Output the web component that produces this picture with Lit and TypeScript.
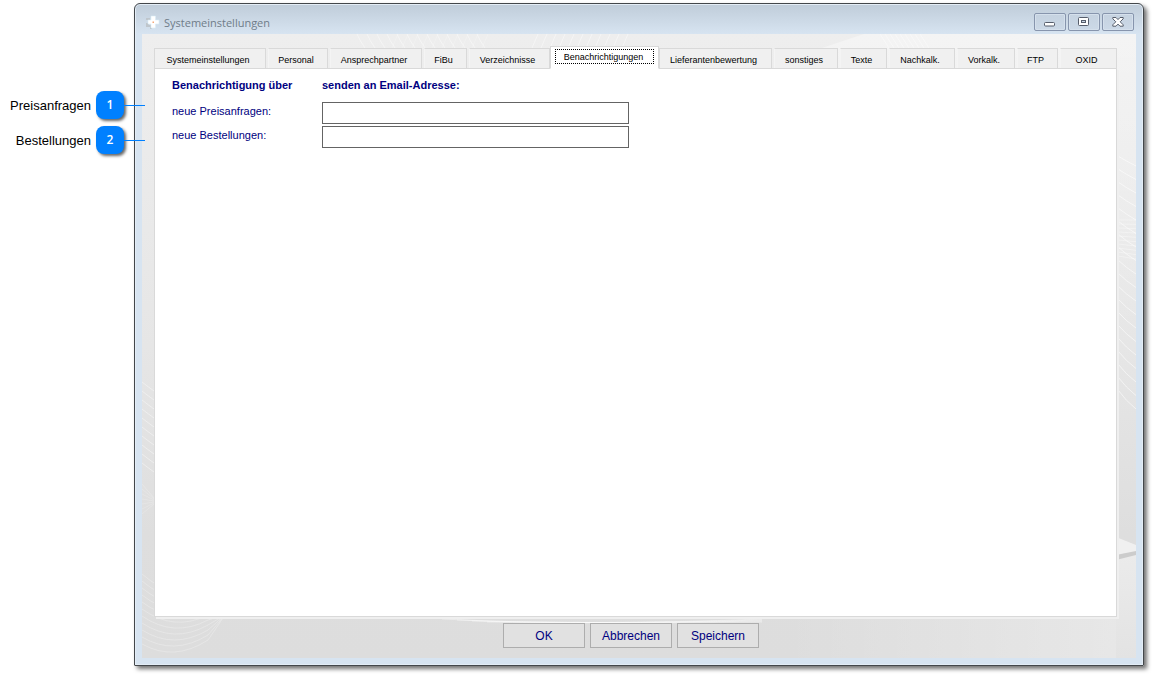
import { LitElement, html, svg, css } from "lit";
import { customElement, property, state } from "lit/decorators.js";
import { classMap } from "lit/directives/class-map.js";

const TABS = [
  "Systemeinstellungen",
  "Personal",
  "Ansprechpartner",
  "FiBu",
  "Verzeichnisse",
  "Benachrichtigungen",
  "Lieferantenbewertung",
  "sonstiges",
  "Texte",
  "Nachkalk.",
  "Vorkalk.",
  "FTP",
  "OXID",
];

const range = (n: number) => Array.from({ length: n }, (_, i) => i);

/** Numbered marker beside the window, with a leader line pointing into it. */
@customElement("callout-marker")
export class CalloutMarker extends LitElement {
  @property({ type: Number }) number = 1;
  @property() label = "";

  static styles = css`
    :host {
      display: flex;
      align-items: center;
      justify-content: flex-end;
      gap: 5px;
      position: relative;
      color: #000;
      font: 13px/28px "Liberation Sans", Arial, sans-serif;
    }
    .label {
      padding-top: 2px;
      line-height: 26px;
    }
    .badge {
      width: 28px;
      height: 28px;
      border-radius: 8px;
      background: #0080ff;
      box-shadow: 2px 2px 3px rgba(0, 0, 0, 0.6);
      color: #fff;
      font: 600 12px/28px "Open Sans", "Noto Sans", sans-serif;
      text-align: center;
    }
    .leader {
      position: absolute;
      left: 100%;
      top: 14px;
      width: 21px;
      height: 1px;
      background: #0080ff;
    }
  `;

  render() {
    return html`<span class="label">${this.label}</span><span class="badge">${this.number}</span
      ><span class="leader"></span>`;
  }
}

/** Faint curves and facets behind the window content. */
@customElement("window-backdrop")
export class WindowBackdrop extends LitElement {
  static styles = css`
    :host {
      position: absolute;
      inset: 0;
      background: linear-gradient(to bottom, #eeeeee, #e6e6e6 50%, #dedede 80%, #dddddd);
    }
    .art {
      display: block;
      width: 100%;
      height: 100%;
    }
  `;

  render() {
    return html`<svg class="art" viewBox="0 0 994 624" preserveAspectRatio="none" aria-hidden="true">
      <defs>
        <linearGradient id="lift" x1="0" x2="0" y1="0" y2="1">
          <stop offset="0" stop-color="#fff" stop-opacity=".35" />
          <stop offset="1" stop-color="#fff" stop-opacity="0" />
        </linearGradient>
        <linearGradient id="floor" x1="0" x2="1">
          <stop offset="0" stop-color="#fff" stop-opacity="0" />
          <stop offset="1" stop-color="#fff" stop-opacity=".3" />
        </linearGradient>
        <linearGradient id="side" x1="0" x2="0" y1="0" y2="1">
          <stop offset="0" stop-color="#ebebeb" />
          <stop offset="1" stop-color="#e3e3e3" />
        </linearGradient>
      </defs>
      <path d="M680 14L722 0H994V300H680Z" fill="url(#lift)" />
      <path d="M974 580V624H640V584Z" fill="url(#floor)" />
      <path d="M974 520H994V624H974Z" fill="url(#side)" />
      <path d="M974 503L994 511V518L974 521Z" fill="#f0f0f0" />
      <path d="M974 521L994 517V521L974 526Z" fill="#cccccc" />
      <g fill="none" stroke="#fff" stroke-opacity=".4">
        ${range(13).map((i) => svg`<path d=${`M${215 + i * 10} 0q3 7 8 14`} />`)}
        ${range(10).map((i) => svg`<path d=${`M${250 + i * 10} 14l6 -14`} stroke-opacity=".2" />`)}
        ${range(11).map((i) => svg`<path d=${`M${390 + i * 9} 14l6 -14`} />`)}
        ${range(9).map((i) => svg`<path d=${`M${738 + i * 5} 0l9 14`} />`)}
      </g>
      <g fill="none" stroke="#fff" stroke-opacity=".55">
        ${range(19).map((i) => svg`<path d=${`M976 ${122 + i * 13}q8 ${5 + i / 3} 18 ${10 + i / 2}`} />`)}
        ${range(10).map((i) => svg`<path d=${`M976 ${186 + i * 4}l18 ${i / 3}`} stroke-opacity=".35" />`)}
      </g>
      <g fill="none" stroke="#fff" stroke-opacity=".4">
        ${range(10).map((i) => svg`<path d=${`M0 ${348 + i * 9}q5 4 12 9`} />`)}
        ${range(7).map((i) => svg`<path d=${`M0 ${450 + i * 5}l12 ${14 - i * 4}`} stroke-opacity=".2" />`)}
        ${range(11).map((i) => svg`<path d=${`M0 ${540 + i * 7}Q32 ${568 + i * 6} 66 ${556 + i * 5}Q76 ${572 + i * 2} 88 ${583 - i}`} stroke-opacity=".25" />`)}
        ${range(4).map((i) => svg`<path d=${`M${300 + i * 15} ${585 + i}Q440 ${592 - i} 620 ${585 + i}`} />`)}
      </g>
    </svg>`;
  }
}

@customElement("app-root")
export class AppRoot extends LitElement {
  @state() private active = 5;

  static styles = css`
    :host {
      display: block;
      background: #fff;
      font-family: "Liberation Sans", Arial, sans-serif;
    }
    * {
      box-sizing: border-box;
    }
    .stage {
      display: grid;
      grid-template-columns: 134px minmax(0, 1fr);
      min-height: 100vh;
      padding: 3px 8px 8px 0;
    }
    .callouts {
      display: flex;
      flex-direction: column;
      gap: 7px;
      padding: 88px 10px 0 0;
    }
    .callout-slot {
      position: relative;
      z-index: 1;
    }
    .window {
      display: flex;
      flex-direction: column;
      padding: 0 7px 7px;
      border: 1px solid #43474b;
      border-radius: 6px 6px 1px 1px;
      background: linear-gradient(to bottom, #bfccd9, #d7e4f1 30px);
      box-shadow:
        inset 0 0 0 1px #e4edf6,
        3px 3px 4px rgba(0, 0, 0, 0.55);
    }
    .titlebar {
      display: flex;
      align-items: center;
      height: 30px;
      padding: 6px 2px 0 3px;
    }
    .logo {
      width: 16px;
      height: 16px;
      margin-right: 3px;
    }
    .title {
      flex: 1;
      margin: 0;
      padding-top: 2px;
      color: #6f7c89;
      font: 11px/16px "Open Sans", "Noto Sans", sans-serif;
    }
    .controls {
      display: flex;
      gap: 2px;
    }
    .control {
      display: grid;
      place-items: center;
      width: 32px;
      height: 18px;
      padding: 0;
      border: 1px solid #8795ad;
      border-radius: 2px;
      background: linear-gradient(#c5d2e0, #ccd9e7);
      box-shadow: inset 0 0 0 1px #d5e0ec;
    }
    .client {
      position: relative;
      flex: 1;
      display: flex;
      flex-direction: column;
      padding: 12px 17px 10px 12px;
    }
    .body {
      position: relative;
      flex: 1;
      display: flex;
      flex-direction: column;
    }
    .tabs {
      display: grid;
      grid-template-columns: 112fr 60fr 92fr 43fr 81fr 105fr 113fr 64fr 47fr 66fr 58fr 41fr 57fr;
      column-gap: 2px;
      align-items: end;
      height: 23px;
      margin: 0 2px -1px 0;
    }
    .tab {
      min-width: 0;
      height: 21px;
      padding: 1px 2px 0 0;
      border: 1px solid #d9d9d9;
      border-left-color: #f4f4f4;
      background: #f0f0f0;
      color: #000;
      font: 9px/18px "Liberation Sans", Arial, sans-serif;
      white-space: nowrap;
    }
    .tab:first-child,
    .tab.active + .tab {
      border-left-color: #d9d9d9;
    }
    .tab.active {
      position: relative;
      z-index: 1;
      height: 23px;
      margin: 0 -2px;
      padding: 0 4px 2px;
      border-color: #d9d9d9;
      border-bottom-color: #fff;
      background: #fff;
    }
    .focus {
      display: block;
      height: 15px;
      padding-right: 2px;
      border: 1px solid transparent;
      line-height: 14px;
    }
    .active .focus {
      border: 1px dotted #000;
    }
    .panel {
      flex: 1;
      padding: 7px 17px;
      border: 1px solid #d9d9d9;
      background: #fff;
      box-shadow: 2px 2px 0 #efefef;
      margin-right: 2px;
    }
    .form {
      display: grid;
      grid-template-columns: 150px minmax(0, 307px);
      row-gap: 2px;
      color: #000080;
      font-size: 11px;
      line-height: 18px;
    }
    .heading {
      margin: 0;
      padding-bottom: 6px;
      font-size: 11px;
      line-height: 18px;
      font-weight: bold;
      white-space: nowrap;
    }
    .field {
      width: 100%;
      height: 22px;
      padding: 0 4px;
      border: 1px solid #646464;
      border-radius: 0;
      background: #fff;
      color: #000080;
      font: 11px/18px "Liberation Sans", Arial, sans-serif;
    }
    .actions {
      display: flex;
      justify-content: center;
      gap: 5px;
      padding: 6px 11px 0 0;
    }
    .action {
      width: 82px;
      height: 25px;
      padding: 0;
      border: 1px solid #adadad;
      background: #e1e1e1;
      color: #000080;
      font: 12px/22px "Liberation Sans", Arial, sans-serif;
    }
  `;

  render() {
    return html`
      <main class="stage">
        <aside class="callouts">
          <callout-marker class="callout-slot" .number=${1} label="Preisanfragen"></callout-marker>
          <callout-marker class="callout-slot" .number=${2} label="Bestellungen"></callout-marker>
        </aside>
        <section class="window" aria-labelledby="title">
          <header class="titlebar">
            <svg class="logo" viewBox="0 0 16 16" aria-hidden="true">
              <path d="M1 4h4v2H1zM1 9h3v2h3v4H5v-2H1z" fill="#bfc6cc" />
              <path d="M6 2h4.500v4H14v4h-3.500v4H6v-4H3V6h3z" fill="#fff" stroke="#d9ecf6" stroke-width=".6" />
              <rect x="7.500" y="7.500" width="1.500" height="1.500" fill="#f3a878" />
            </svg>
            <h1 class="title" id="title">Systemeinstellungen</h1>
            <div class="controls">
              <button class="control" aria-label="Minimieren">
                <svg width="12" height="12" viewBox="0 0 12 12">
                  <rect x=".5" y="6.500" width="10" height="3.500" rx="1" fill="#fff" stroke="#565d6b" />
                </svg>
              </button>
              <button class="control" aria-label="Maximieren">
                <svg width="12" height="12" viewBox="0 0 12 12">
                  <rect x=".5" y="1.500" width="10" height="8" rx="1" fill="#fff" stroke="#565d6b" />
                  <rect x="3.500" y="4.500" width="4" height="2" fill="#c9d6e4" stroke="#565d6b" />
                </svg>
              </button>
              <button class="control" aria-label="Schließen">
                <svg width="12" height="12" viewBox="0 0 12 12">
                  <path
                    d="M.8 1.500H4L6 3.600 8 1.500h3.200v1.300L8.200 5.800l3 3v1.400H8L6 8.100 4 10.200H.8V8.800l3-3-3-3z"
                    fill="#fff"
                    stroke="#565d6b"
                    stroke-linejoin="round"
                  />
                </svg>
              </button>
            </div>
          </header>
          <div class="client">
            <window-backdrop></window-backdrop>
            <div class="body">
              <div class="tabs" role="tablist">
                ${TABS.map(
                  (name, i) => html`<button
                    class=${classMap({ tab: true, active: i === this.active })}
                    role="tab"
                    aria-selected=${i === this.active ? "true" : "false"}
                    @click=${() => (this.active = i)}
                  >
                    <span class="focus">${name}</span>
                  </button>`
                )}
              </div>
              <div class="panel" role="tabpanel">
                <form class="form" id="form" @submit=${(e: Event) => e.preventDefault()}>
                  <h2 class="heading">Benachrichtigung über</h2>
                  <h2 class="heading">senden an Email-Adresse:</h2>
                  <label for="preis">neue Preisanfragen:</label>
                  <input class="field" id="preis" type="email" />
                  <label for="bestell">neue Bestellungen:</label>
                  <input class="field" id="bestell" type="email" />
                </form>
              </div>
              <div class="actions">
                <button class="action" form="form">OK</button>
                <button class="action" type="button">Abbrechen</button>
                <button class="action" type="button">Speichern</button>
              </div>
            </div>
          </div>
        </section>
      </main>
    `;
  }
}
